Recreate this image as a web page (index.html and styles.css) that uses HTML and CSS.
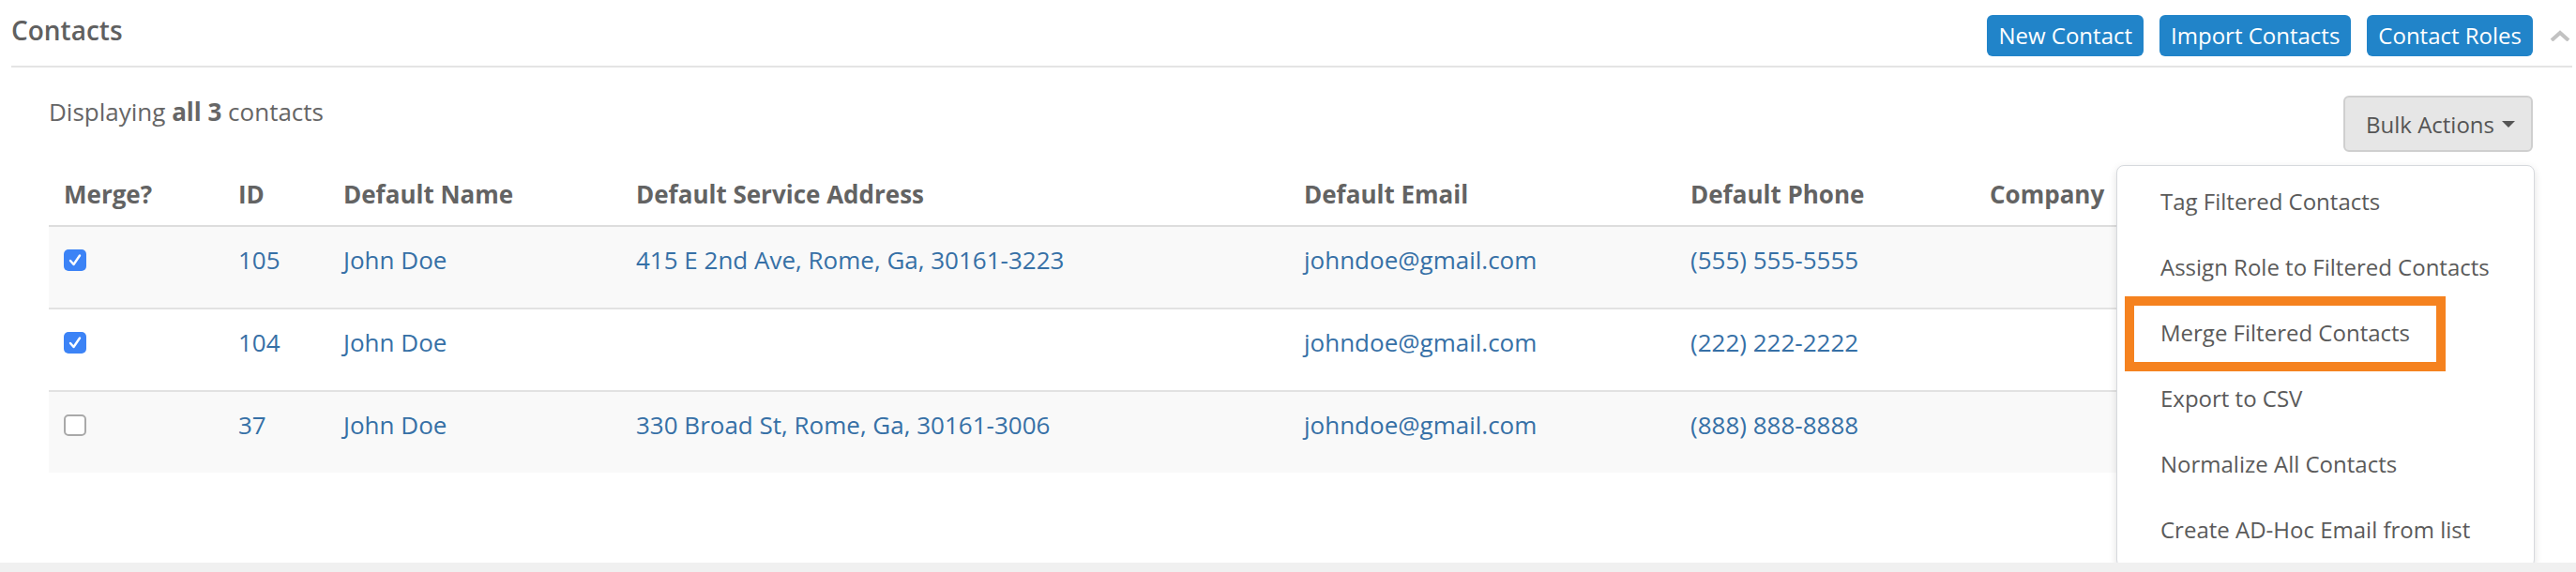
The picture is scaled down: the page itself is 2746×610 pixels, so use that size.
FILE: index.html
```html
<!DOCTYPE html>
<html lang="en">
<head>
<meta charset="utf-8">
<title>Contacts</title>
<link rel="stylesheet" href="styles.css">
</head>
<body>
<div class="panel">
  <header class="panel-head">
    <h1 class="title">Contacts</h1>
    <div class="actions">
      <a class="btn btn-primary">New Contact</a>
      <a class="btn btn-primary">Import Contacts</a>
      <a class="btn btn-primary">Contact Roles</a>
    </div>
    <svg class="collapse" width="22" height="12" viewBox="0 0 22 12" aria-hidden="true"><polyline points="2,11 11,3 20,11" fill="none" stroke="#c2c2c2" stroke-width="4" stroke-linejoin="miter"/></svg>
  </header>
  <div class="panel-body">
    <div class="toolbar">
      <div class="summary">Displaying <b>all 3</b> contacts</div>
      <div class="bulk">
        <button class="btn-bulk" type="button">Bulk Actions <span class="caret"></span></button>
        <ul class="dropdown">
          <li>Tag Filtered Contacts</li>
          <li>Assign Role to Filtered Contacts</li>
          <li>Merge Filtered Contacts</li>
          <li>Export to CSV</li>
          <li>Normalize All Contacts</li>
          <li>Create AD-Hoc Email from list</li>
          <span class="highlight"></span>
        </ul>
      </div>
    </div>
    <table class="contacts">
      <colgroup>
        <col class="c-merge"><col class="c-id"><col class="c-name"><col class="c-addr"><col class="c-email"><col class="c-phone"><col class="c-company">
      </colgroup>
      <thead>
        <tr><th>Merge?</th><th>ID</th><th>Default Name</th><th>Default Service Address</th><th>Default Email</th><th>Default Phone</th><th>Company</th></tr>
      </thead>
      <tbody>
        <tr>
          <td><span class="check on"><svg width="24" height="23" viewBox="0 0 24 23"><polyline points="7,12 10.5,16 17,6.5" fill="none" stroke="#fff" stroke-width="2.4" stroke-linecap="round" stroke-linejoin="round"/></svg></span></td>
          <td><a>105</a></td><td><a>John Doe</a></td><td><a>415 E 2nd Ave, Rome, Ga, 30161-3223</a></td><td><a>johndoe@gmail.com</a></td><td><a>(555) 555-5555</a></td><td></td>
        </tr>
        <tr>
          <td><span class="check on"><svg width="24" height="23" viewBox="0 0 24 23"><polyline points="7,12 10.5,16 17,6.5" fill="none" stroke="#fff" stroke-width="2.4" stroke-linecap="round" stroke-linejoin="round"/></svg></span></td>
          <td><a>104</a></td><td><a>John Doe</a></td><td></td><td><a>johndoe@gmail.com</a></td><td><a>(222) 222-2222</a></td><td></td>
        </tr>
        <tr>
          <td><span class="check"></span></td>
          <td><a>37</a></td><td><a>John Doe</a></td><td><a>330 Broad St, Rome, Ga, 30161-3006</a></td><td><a>johndoe@gmail.com</a></td><td><a>(888) 888-8888</a></td><td></td>
        </tr>
      </tbody>
    </table>
  </div>
</div>
</body>
</html>
```

FILE: styles.css
```css
* { box-sizing: border-box; }

html, body {
  margin: 0;
  padding: 0;
}

body {
  background: #f0f0f0;
  font-family: "Open Sans", "Liberation Sans", sans-serif;
  color: #666;
}

.panel {
  background: #fff;
  height: 600px;
}

.panel-head {
  display: flex;
  align-items: center;
  height: 72px;
  padding-top: 6px;
  margin: 0 4px 0 12px;
  border-bottom: 2px solid #e4e4e4;
}

.title {
  align-self: flex-start;
  margin: 7px 0 0;
  font-size: 28px;
  line-height: 38px;
  font-weight: 600;
  color: #606060;
}

.actions {
  margin-left: auto;
  display: flex;
  gap: 17px;
}

.btn {
  display: inline-flex;
  align-items: center;
  height: 44px;
  padding: 0 12px;
  border-radius: 6px;
  font-size: 24px;
  line-height: 1;
  text-decoration: none;
}

.btn-primary {
  background: #2184c9;
  color: #fff;
}

.collapse {
  margin-left: 18px;
  margin-right: 2px;
  display: block;
}

.panel-body {
  padding: 30px 46px 0 52px;
}

.toolbar {
  display: flex;
  justify-content: space-between;
  align-items: flex-start;
  height: 60px;
}

.summary {
  margin-top: -1px;
  font-size: 26px;
  line-height: 36px;
  color: #666;
}

.summary b {
  font-weight: 700;
}

.bulk {
  position: relative;
}

.btn-bulk {
  display: flex;
  align-items: center;
  justify-content: flex-start;
  width: 202px;
  height: 60px;
  padding: 0 0 0 22px;
  background: #e6e6e6;
  border: 2px solid #cfcfcf;
  border-radius: 6px;
  font-family: inherit;
  font-size: 24px;
  color: #555;
}

.caret {
  display: inline-block;
  margin-left: 8px;
  width: 0;
  height: 0;
  border-left: 7.5px solid transparent;
  border-right: 7.5px solid transparent;
  border-top: 7px solid #555;
}

.dropdown {
  position: absolute;
  top: calc(100% + 14px);
  right: -2px;
  width: 446px;
  margin: 0;
  padding: 3px 0 4px;
  list-style: none;
  background: #fff;
  border: 1px solid #d6d9dd;
  border-radius: 8px;
  box-shadow: 0 3px 8px rgba(0, 0, 0, 0.12);
  z-index: 5;
}

.dropdown li {
  height: 70px;
  padding-left: 46px;
  font-size: 24px;
  line-height: 70px;
  color: #5a5a5a;
  white-space: nowrap;
}

.highlight {
  position: absolute;
  left: 8px;
  top: 139px;
  width: 342px;
  height: 80px;
  border: 10px solid #f5821f;
}

.contacts {
  width: 100%;
  margin-top: 27px;
  border-collapse: collapse;
  table-layout: fixed;
  font-size: 26px;
}

.c-merge { width: 186px; }
.c-id { width: 112px; }
.c-name { width: 312px; }
.c-addr { width: 712px; }
.c-email { width: 412px; }
.c-phone { width: 319px; }

.contacts th {
  text-align: left;
  padding: 0 16px 15px;
  line-height: 36px;
  font-weight: 700;
  color: #636363;
  border-bottom: 2px solid #dddddd;
  white-space: nowrap;
}

.contacts td {
  padding: 17px 16px 33px;
  line-height: 36px;
  vertical-align: top;
  border-top: 2px solid #e2e2e2;
  white-space: nowrap;
}

.contacts tbody tr:nth-child(odd) {
  background: #f9f9f9;
}

.contacts a {
  color: #3670a6;
  text-decoration: none;
}

.check {
  display: block;
  margin-top: 7px;
  width: 24px;
  height: 23px;
  border-radius: 5px;
  border: 2px solid #a9a9a9;
  background: #fff;
}

.check.on {
  border: none;
  background: #3c83f6;
}

.check svg {
  display: block;
}
```
